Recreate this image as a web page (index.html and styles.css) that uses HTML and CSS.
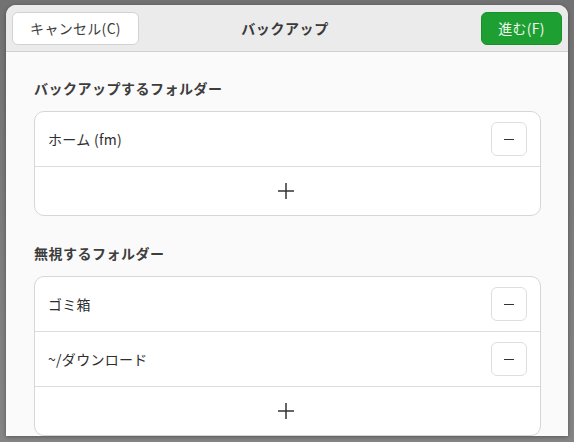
FILE: index.html
```html
<!DOCTYPE html>
<html>
<head>
    <meta charset="utf-8">
    <link rel="stylesheet" href="styles.css">
</head>
<body>
    <div class="window">
        <div class="headerbar">
            <button class="btn cancel-btn">キャンセル(C)</button>
            <h1 class="title">バックアップ</h1>
            <button class="btn forward-btn">進む(F)</button>
        </div>

        <div class="content">
            <h3 class="section-title">バックアップするフォルダー</h3>
            <div class="list-box">
                <div class="list-row">
                    <span class="row-label">ホーム (fm)</span>
                    <button class="remove-btn"><span class="minus"></span></button>
                </div>
                <div class="add-row">
                    <svg width="18" height="18" viewBox="0 0 18 18">
                        <path d="M9 1v16M1 9h16" stroke="#333" stroke-width="1.5" fill="none"/>
                    </svg>
                </div>
            </div>

            <h3 class="section-title">無視するフォルダー</h3>
            <div class="list-box">
                <div class="list-row">
                    <span class="row-label">ゴミ箱</span>
                    <button class="remove-btn"><span class="minus"></span></button>
                </div>
                <div class="list-row">
                    <span class="row-label">~/ダウンロード</span>
                    <button class="remove-btn"><span class="minus"></span></button>
                </div>
                <div class="add-row">
                    <svg width="18" height="18" viewBox="0 0 18 18">
                        <path d="M9 1v16M1 9h16" stroke="#333" stroke-width="1.5" fill="none"/>
                    </svg>
                </div>
            </div>
        </div>
    </div>
</body>
</html>
```

FILE: styles.css
```css
body {
    margin: 0;
    padding: 5px 6px 0 6px;
    height: 442px;
    box-sizing: border-box;
    background: linear-gradient(#727272, #858585);
    font-family: "Noto Sans CJK JP", "Noto Sans", sans-serif;
    font-size: 14px;
    letter-spacing: 0.3px;
    color: #2e2e2e;
    overflow: hidden;
}

.window {
    width: 562px;
    height: 431px;
    background-color: #fafafa;
    border-radius: 10px 10px 0 0;
    overflow: hidden;
    box-shadow: 0 1px 4px rgba(0,0,0,0.35);
}

.headerbar {
    display: grid;
    grid-template-columns: 1fr auto 1fr;
    align-items: center;
    height: 46px;
    padding: 0 6px;
    background-color: #ebebeb;
    border-bottom: 1px solid #cfcfcf;
}

.title {
    margin: 0 4px 0 0;
    font-size: 14px;
    font-weight: 700;
    letter-spacing: 0.6px;
    color: #3a3a3a;
}

.btn {
    height: 33px;
    border-radius: 6px;
    font-family: inherit;
    font-size: 14px;
    letter-spacing: 0.3px;
    padding: 0 12px;
    cursor: pointer;
}

.cancel-btn {
    justify-self: start;
    width: 127px;
    background-color: #ffffff;
    border: 1px solid #d2d2d2;
    color: #3d3d3d;
}

.forward-btn {
    justify-self: end;
    width: 81px;
    background-color: #1e9f32;
    border: 1px solid #1a8f2c;
    color: #eef8ef;
}

.content {
    padding: 27px 27px 0 28px;
}

.section-title {
    margin: 0 0 14px 0;
    font-size: 14px;
    line-height: 18px;
    font-weight: 700;
    letter-spacing: 0.5px;
    color: #3d3d3d;
}

.list-box {
    background: white;
    border: 1px solid #d6d6d6;
    border-radius: 10px;
    margin-bottom: 28px;
}

.list-row {
    display: flex;
    justify-content: space-between;
    align-items: center;
    height: 54px;
    padding: 0 13px;
    border-bottom: 1px solid #dcdcdc;
}

.row-label {
    color: #2e2e2e;
}

.remove-btn {
    display: flex;
    align-items: center;
    justify-content: center;
    width: 36px;
    height: 34px;
    padding: 0;
    background: white;
    border: 1px solid #dedede;
    border-radius: 6px;
    cursor: pointer;
}

.minus {
    width: 10px;
    height: 1px;
    background-color: #333;
}

.add-row {
    display: flex;
    align-items: center;
    justify-content: center;
    height: 48px;
    padding-right: 3px;
}
```
